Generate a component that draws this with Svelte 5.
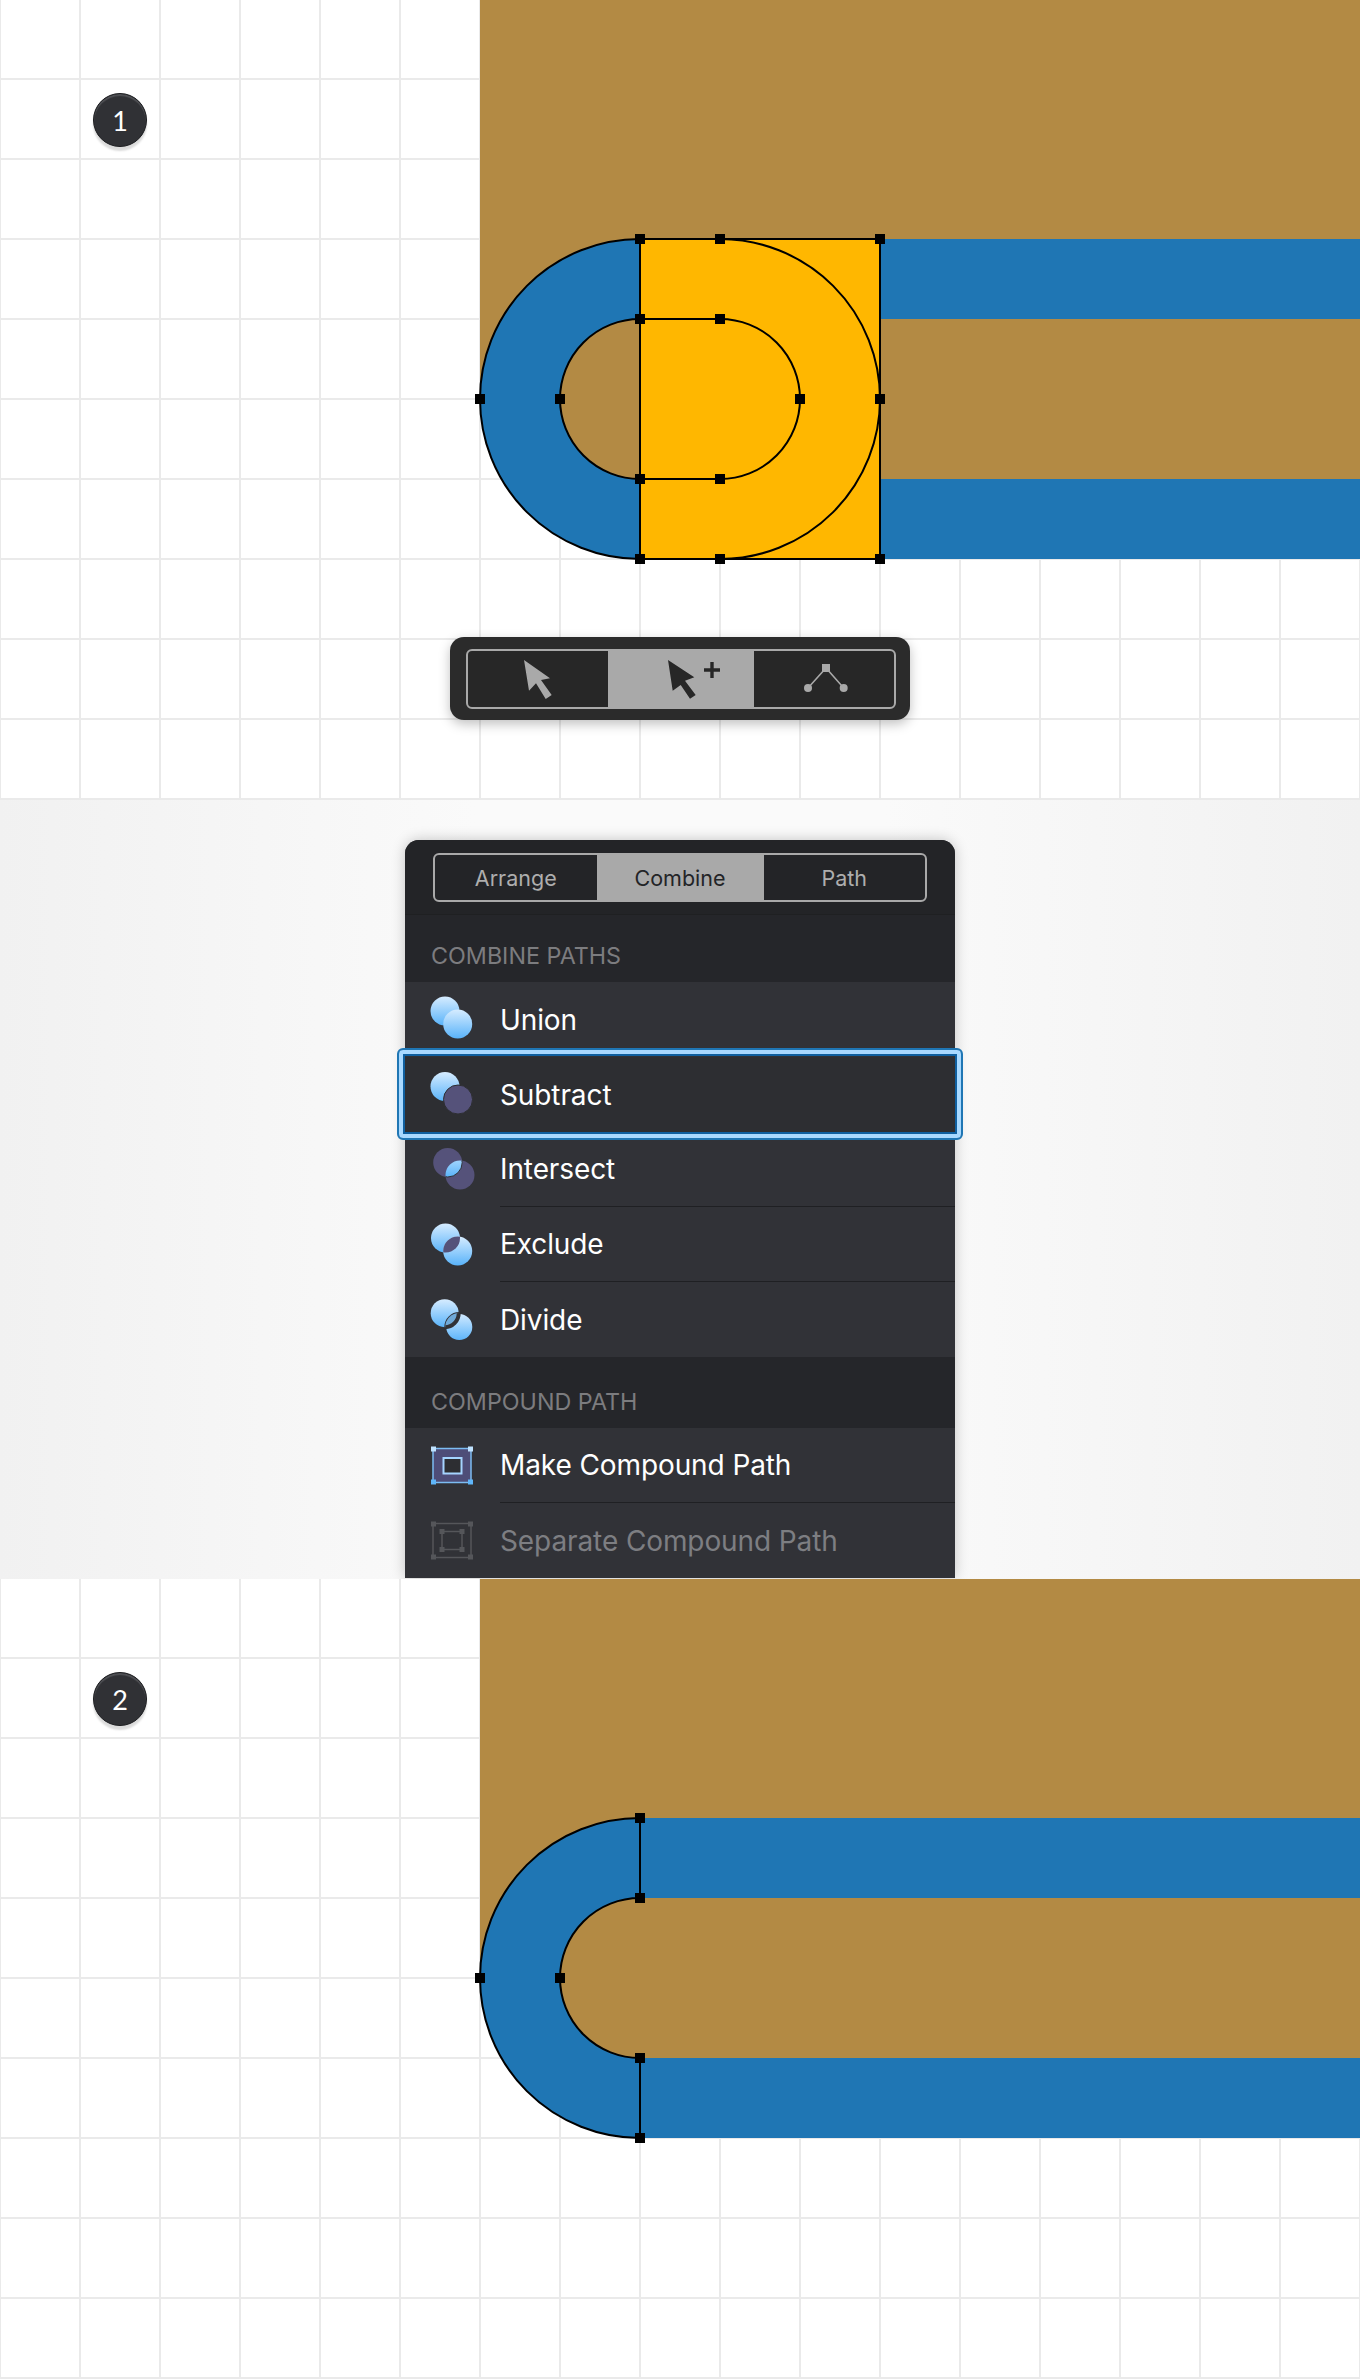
<script>
  const handlesOne = [
    [640, 239], [720, 239], [880, 239], [640, 319], [720, 319],
    [480, 399], [560, 399], [800, 399], [880, 399],
    [640, 479], [720, 479], [640, 559], [720, 559], [880, 559]
  ];
  const handlesTwo = [
    [640, 239], [640, 319], [480, 399], [560, 399], [640, 479], [640, 559]
  ];

  const combineRows = [
    { label: 'Union', icon: 'union' },
    { label: 'Subtract', icon: 'subtract', active: true },
    { label: 'Intersect', icon: 'intersect', sep: true },
    { label: 'Exclude', icon: 'exclude', sep: true },
    { label: 'Divide', icon: 'divide' }
  ];
  const compoundRows = [
    { label: 'Make Compound Path', icon: 'make', sep: true },
    { label: 'Separate Compound Path', icon: 'separate', muted: true }
  ];
</script>

{#snippet handles(points)}
  {#each points as [x, y]}
    <rect x={x - 5} y={y - 5} width="10" height="10" fill="#000" />
  {/each}
{/snippet}

{#snippet backdrop()}
  <rect x="480" y="0" width="880" height="399" fill="#b38a44" />
  <rect x="560" y="399" width="800" height="80" fill="#b38a44" />
  <rect x="640" y="239" width="720" height="80" fill="#1f76b4" />
  <rect x="640" y="479" width="720" height="80" fill="#1f76b4" />
  <path d="M640 239A160 160 0 0 0 640 559V479A80 80 0 0 1 640 319Z" fill="#1f76b4" stroke="#000" stroke-width="2" />
{/snippet}

{#snippet icon(kind)}
  <svg class="icon" viewBox="0 0 48 48" aria-hidden="true">
    {#if kind === 'union'}
      <circle cx="17" cy="15" r="14.5" fill="url(#blue)" />
      <circle cx="29.7" cy="28" r="14.5" fill="url(#blue)" />
    {:else if kind === 'subtract'}
      <circle cx="17" cy="15.5" r="14.5" fill="url(#blue)" />
      <circle cx="30" cy="28.5" r="14.5" fill="#55527a" stroke="#2d2e32" />
    {:else if kind === 'intersect'}
      <clipPath id="clip-intersect"><circle cx="32" cy="29" r="14.5" /></clipPath>
      <circle cx="19.7" cy="16.5" r="14.5" fill="#55527a" />
      <circle cx="32" cy="29" r="14.5" fill="#55527a" />
      <circle cx="19.7" cy="16.5" r="14.5" fill="url(#blue)" stroke="#313237" clip-path="url(#clip-intersect)" />
    {:else if kind === 'exclude'}
      <clipPath id="clip-exclude"><circle cx="29.7" cy="30" r="14.5" /></clipPath>
      <circle cx="17.5" cy="17" r="14.5" fill="url(#blue)" />
      <circle cx="29.7" cy="30" r="14.5" fill="url(#blue)" />
      <circle cx="17.5" cy="17" r="14.5" fill="#55527a" clip-path="url(#clip-exclude)" />
    {:else if kind === 'divide'}
      <clipPath id="clip-divide"><circle cx="31.3" cy="31" r="14" /></clipPath>
      <circle cx="16.7" cy="17.2" r="14" fill="url(#blue)" />
      <circle cx="31.3" cy="31" r="14" fill="url(#blue)" stroke="#313237" stroke-width="2" />
      <circle cx="16.7" cy="17.2" r="14" fill="#6fa9d8" stroke="#313237" stroke-width="4" clip-path="url(#clip-divide)" />
    {:else if kind === 'make'}
      <rect x="5" y="6.5" width="38" height="34" fill="#4e4d78" stroke="#7cbcf2" stroke-width="1.5" />
      <rect x="15.5" y="16" width="18" height="15.5" fill="#2d2e32" stroke="#a5d4ff" stroke-width="2" />
      <rect x="3" y="4.5" width="5" height="5" fill="#bfe2ff" />
      <rect x="40" y="4.5" width="5" height="5" fill="#bfe2ff" />
      <rect x="3" y="37.5" width="5" height="5" fill="#5fb6fa" />
      <rect x="40" y="37.5" width="5" height="5" fill="#5fb6fa" />
    {:else}
      <g fill="none" stroke="#55565a" stroke-width="1.5">
        <rect x="5" y="6.5" width="38" height="34" />
        <rect x="14" y="14.5" width="20" height="18" />
      </g>
      <g fill="#55565a">
        {#each [[3, 4.5], [40, 4.5], [3, 37.5], [40, 37.5], [11.5, 12], [31.5, 12], [11.5, 30], [31.5, 30]] as [x, y]}
          <rect {x} {y} width="5" height="5" />
        {/each}
      </g>
    {/if}
  </svg>
{/snippet}

{#snippet rows(items)}
  {#each items as row}
    <div class="row" class:active={row.active} class:muted={row.muted}>
      {@render icon(row.icon)}
      <span class="label" class:sep={row.sep}>{row.label}</span>
    </div>
  {/each}
{/snippet}

<svg class="defs" aria-hidden="true">
  <defs>
    <linearGradient id="blue" x1="0" y1="0" x2="0" y2="1">
      <stop offset="0" stop-color="#d6ecff" />
      <stop offset="1" stop-color="#59b3fa" />
    </linearGradient>
  </defs>
</svg>

<main>
  <section class="canvas">
    <span class="badge">1</span>
    <svg class="art" viewBox="0 0 1360 800">
      {@render backdrop()}
      <rect x="640" y="239" width="240" height="320" fill="#ffb700" stroke="#000" stroke-width="2" />
      <path d="M720 239A160 160 0 0 1 720 559" fill="none" stroke="#000" stroke-width="2" />
      <path d="M640 319H720A80 80 0 0 1 720 479H640" fill="none" stroke="#000" stroke-width="2" />
      {@render handles(handlesOne)}
    </svg>

    <div class="toolbar">
      <div class="tools">
        <div class="tool">
          <svg width="40" height="56" viewBox="0 0 40 56">
            <path d="M6 9L32 27.3L23 29L33.7 44L27.7 48L18 32.3L11 39.7Z" fill="#a9a9a9" />
          </svg>
        </div>
        <div class="tool on">
          <svg width="80" height="56" viewBox="0 0 80 56">
            <path d="M27 9L53.3 26.3L44 29.7L54.7 44L49 47.7L39.7 34L31.7 39.7Z" fill="#272727" />
            <path d="M71 11V27M63 19H79" stroke="#272727" stroke-width="3.4" />
          </svg>
        </div>
        <div class="tool">
          <svg width="48" height="56" viewBox="0 0 48 56">
            <path d="M8 37L26 17L43.7 37" fill="none" stroke="#a9a9a9" stroke-width="1.5" />
            <rect x="22" y="13" width="8" height="8" fill="#a9a9a9" />
            <circle cx="8" cy="37" r="4" fill="#a9a9a9" />
            <circle cx="43.7" cy="37" r="4" fill="#a9a9a9" />
          </svg>
        </div>
      </div>
    </div>
  </section>

  <section class="stage">
    <div class="menu">
      <header class="menu-head">
        <div class="tabs">
          <span class="tab">Arrange</span>
          <span class="tab on">Combine</span>
          <span class="tab">Path</span>
        </div>
      </header>

      <h3 class="section first">COMBINE PATHS</h3>
      {@render rows(combineRows)}

      <h3 class="section">COMPOUND PATH</h3>
      {@render rows(compoundRows)}
    </div>
  </section>

  <section class="canvas">
    <span class="badge">2</span>
    <svg class="art" viewBox="0 0 1360 800">
      {@render backdrop()}
      {@render handles(handlesTwo)}
    </svg>
  </section>
</main>

<style>
  :global(body) {
    margin: 0;
    background: #fff;
  }

  .defs {
    position: absolute;
    width: 0;
    height: 0;
  }

  main {
    width: 1360px;
    font-family: Inter, "Liberation Sans", sans-serif;
  }

  .canvas {
    position: relative;
    height: 800px;
    background-color: #fff;
    background-image:
      linear-gradient(to right, #eaeaea 2px, transparent 2px),
      linear-gradient(to bottom, #eaeaea 2px, transparent 2px);
    background-size: 80px 80px;
    background-position: -1px -2px;
  }

  .art {
    display: block;
    width: 1360px;
    height: 800px;
  }

  .badge {
    position: absolute;
    left: 93px;
    top: 93px;
    width: 54px;
    height: 54px;
    box-sizing: border-box;
    border: 1px solid #1c1d20;
    border-radius: 50%;
    display: flex;
    align-items: center;
    justify-content: center;
    background: #303135;
    box-shadow:
      inset 0 2px 1px #505155,
      0 4px 2px rgba(0, 0, 0, 0.14);
    color: #fff;
    font-family: Lato, sans-serif;
    font-size: 27px;
    font-weight: 400;
  }

  .toolbar {
    position: absolute;
    left: 450px;
    top: 637px;
    width: 460px;
    height: 83px;
    box-sizing: border-box;
    padding: 12px 14px 11px 16px;
    border-radius: 14px;
    background: #2b2b2b;
    box-shadow: 0 4px 12px rgba(0, 0, 0, 0.25);
  }

  .tools {
    display: flex;
    height: 100%;
    box-sizing: border-box;
    border: 2px solid #a9a9a9;
    border-radius: 6px;
    background: #272727;
    overflow: hidden;
  }

  .tool {
    flex: 1;
    display: flex;
    align-items: center;
    justify-content: center;
  }

  .tool.on {
    flex: 0 0 146px;
    background: #a9a9a9;
  }

  .stage {
    height: 779px;
    overflow: hidden;
    background: linear-gradient(to right, #f1f1f1, #fafafa 35%, #fafafa 65%, #f1f1f1);
  }

  .menu {
    width: 550px;
    margin: 40px auto 0;
    background: #313237;
    box-shadow: 0 0 14px rgba(0, 0, 0, 0.22);
    border-radius: 14px 14px 0 0;
  }

  .menu-head {
    height: 75px;
    box-sizing: border-box;
    padding: 13px 28px 13px 28px;
    background: #232427;
    border-radius: 14px 14px 0 0;
    border-bottom: 1px solid #1f2022;
  }

  .tabs {
    display: flex;
    height: 49px;
    box-sizing: border-box;
    border: 2px solid #a9a9a9;
    border-radius: 6px;
    overflow: hidden;
  }

  .tab {
    flex: 1;
    display: flex;
    align-items: center;
    justify-content: center;
    color: #aeaeae;
    font-size: 21.5px;
  }

  .tab.on {
    flex: 0 0 167px;
    background: #a9a9a9;
    color: #232427;
  }

  .section {
    margin: 0;
    height: 71px;
    box-sizing: border-box;
    padding: 0 0 14px 26px;
    display: flex;
    align-items: flex-end;
    background: #25262a;
    color: #7c7c7f;
    font-size: 23.3px;
    font-weight: 400;
    line-height: 24px;
  }

  .section.first {
    height: 67px;
  }

  .row {
    height: 75px;
    display: flex;
    align-items: center;
    box-sizing: border-box;
    padding-left: 23px;
    color: #fff;
    font-size: 28px;
    letter-spacing: -0.1px;
  }

  .row.muted {
    color: #7d7e82;
  }

  .row.active {
    position: relative;
    background: #2d2e32;
  }

  .row.active::after {
    content: '';
    position: absolute;
    inset: -9px -8px -8px;
    border: 2.5px solid #1f76b4;
    border-radius: 6px;
    box-shadow:
      inset 0 0 0 4px #a9d9ff,
      inset 0 0 0 6px #0f5f9f;
  }

  .icon {
    flex: none;
    width: 48px;
    height: 48px;
    margin-right: 24px;
  }

  .label {
    flex: 1;
    align-self: stretch;
    display: flex;
    align-items: center;
    box-sizing: border-box;
  }

  .label.sep {
    border-bottom: 1px solid #1f2023;
  }
</style>
